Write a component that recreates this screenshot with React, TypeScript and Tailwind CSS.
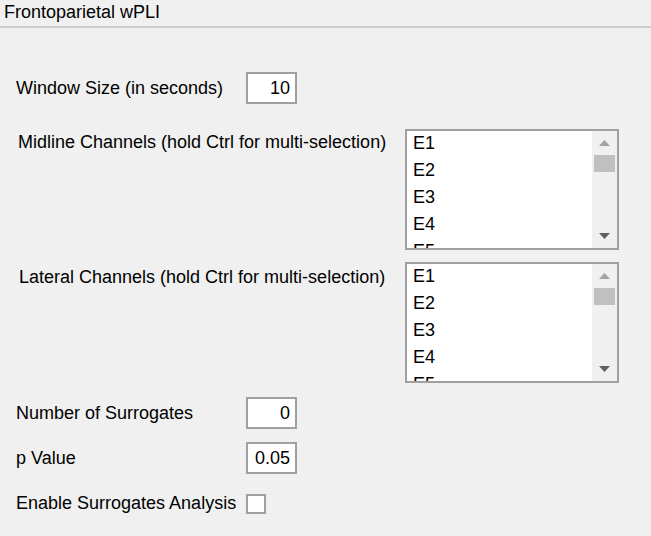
import React from "react";

const font = { fontFamily: '"Liberation Sans", Arial, sans-serif' };

function NumberBox({ value }: { value: string }) {
    return (
        <div className="w-[51px] h-[32px] border-2 border-[#a0a0a0] bg-white flex items-center justify-end pr-[5px] text-[18px] text-black">
            {value}
        </div>
    );
}

function ListBox({ items }: { items: string[] }) {
    return (
        <div className="w-[214px] h-[121px] border-2 border-[#a0a0a0] bg-white flex overflow-hidden">
            <div className="flex-1 pl-[6px] overflow-hidden">
                {items.map(it => (
                    <div key={it} className="h-[27px] leading-[25px] text-[18px] text-black">{it}</div>
                ))}
            </div>
            {/* scrollbar */}
            <div className="w-[25px] h-full bg-[#f0f0f0] flex flex-col items-center">
                <svg width="11" height="6" viewBox="0 0 11 6" className="mt-[9px]">
                    <polygon points="5.5,0 11,6 0,6" fill="#a3a3a3" />
                </svg>
                <div className="w-[21px] h-[17px] bg-[#c0c0c0] mt-[9px]" />
                <div className="flex-1" />
                <svg width="11" height="6" viewBox="0 0 11 6" className="mb-[9px]">
                    <polygon points="0,0 11,0 5.5,6" fill="#606060" />
                </svg>
            </div>
        </div>
    );
}

export default function App() {
    const channels = ["E1", "E2", "E3", "E4", "E5"];

    return (
        <div className="w-[651px] h-[536px] bg-[#f0f0f0] overflow-hidden" style={font}>
            {/* Title */}
            <div className="h-[28px] border-b-2 border-[#cccccc] pl-[4px] text-[18px] leading-[24px] text-black">
                Frontoparietal wPLI
            </div>

            <div className="flex flex-col">
                {/* Window size */}
                <div className="flex items-center mt-[44px]">
                    <div className="w-[246px] pl-[16px] text-[18px] text-black">Window Size (in seconds)</div>
                    <NumberBox value="10" />
                </div>

                {/* Midline */}
                <div className="flex items-start mt-[25px]">
                    <div className="w-[405px] pl-[18px] text-[18px] leading-[27px] text-black">
                        Midline Channels (hold Ctrl for multi-selection)
                    </div>
                    <ListBox items={channels} />
                </div>

                {/* Lateral */}
                <div className="flex items-start mt-[12px]">
                    <div className="w-[405px] pl-[19px] mt-[2px] text-[18px] leading-[27px] text-black">
                        Lateral Channels (hold Ctrl for multi-selection)
                    </div>
                    <ListBox items={channels} />
                </div>

                {/* Surrogates */}
                <div className="flex items-center mt-[14px]">
                    <div className="w-[246px] pl-[16px] text-[18px] text-black">Number of Surrogates</div>
                    <NumberBox value="0" />
                </div>

                <div className="flex items-center mt-[13px]">
                    <div className="w-[246px] pl-[16px] text-[18px] text-black">p Value</div>
                    <NumberBox value="0.05" />
                </div>

                <div className="flex items-center mt-[16px] pl-[16px] gap-[10px]">
                    <span className="text-[18px] text-black">Enable Surrogates Analysis</span>
                    <div className="w-[20px] h-[20px] border-2 border-[#a0a0a0] bg-white" />
                </div>
            </div>
        </div>
    );
}
